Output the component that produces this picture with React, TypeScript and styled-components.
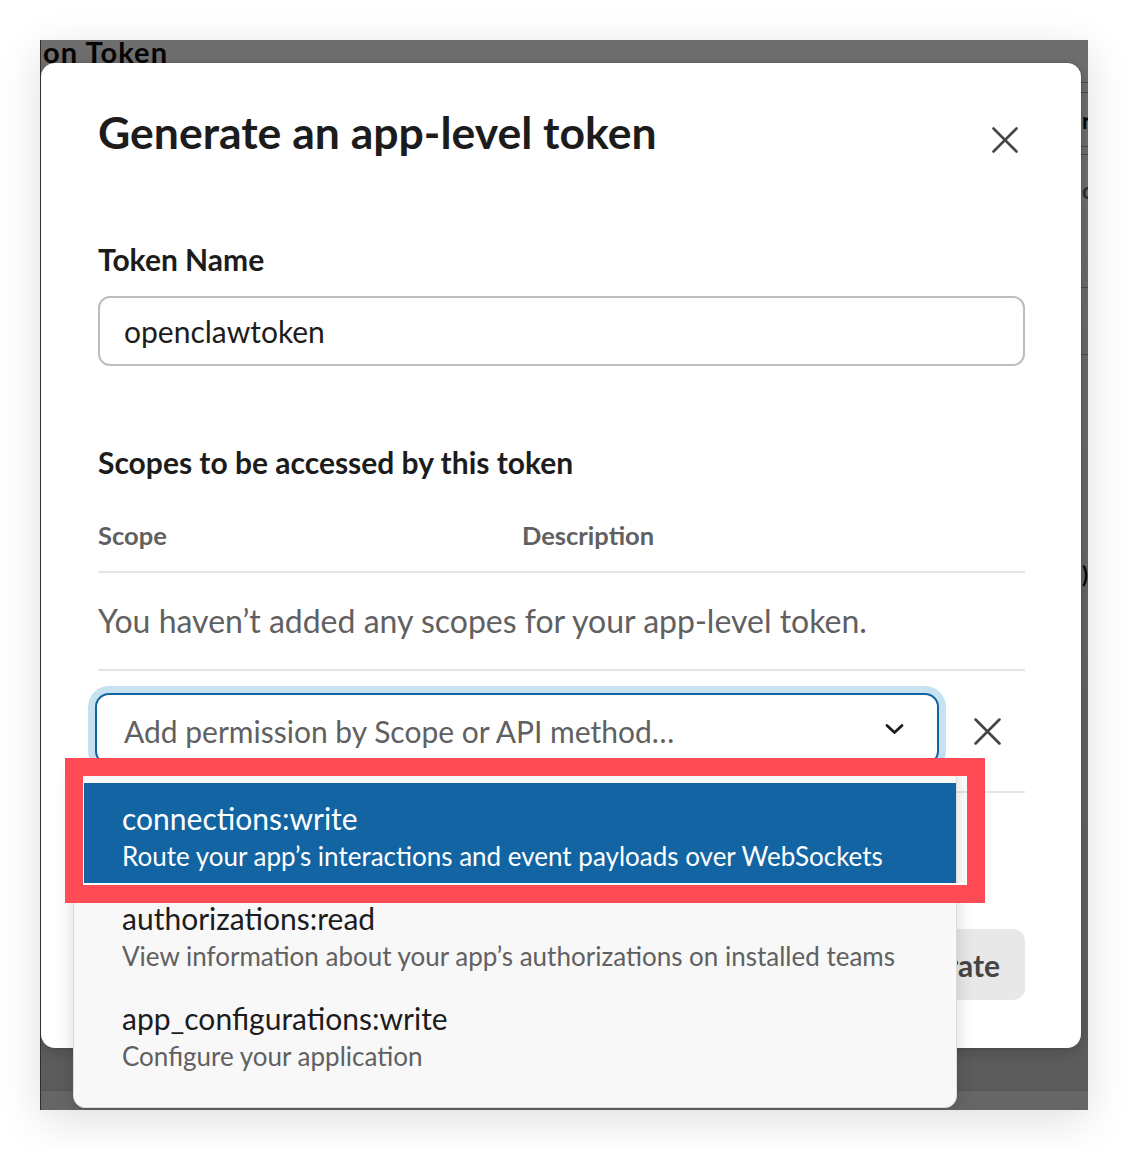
import React from "react";
import styled, { createGlobalStyle } from "styled-components";

const Global = createGlobalStyle`
  html, body { margin: 0; padding: 0; background: #ffffff; }
  body { font-family: Lato, "Noto Sans", "Liberation Sans", sans-serif; -webkit-font-smoothing: antialiased; }
  * { box-sizing: border-box; }
`;

const Page = styled.div`
  width: 1128px;
  height: 1150px;
  padding: 40px;
  background: #ffffff;
`;

const Frame = styled.div`
  position: relative;
  width: 1048px;
  height: 1070px;
  overflow: hidden;
  border-left: 1px solid #2e2e2e;
  background: linear-gradient(#6e6e6e, #5b5b5b);
  box-shadow: 0 10px 40px rgba(0, 0, 0, 0.13);
  display: flex;
  flex-direction: column;
`;

const BgTop = styled.div`
  display: grid;
  grid-template-columns: 1040px 200px;
  flex: 1;
`;

const BgMain = styled.div`
  padding-left: 2px;
  overflow: hidden;
`;

const BgTitle = styled.div`
  font-size: 29px;
  font-weight: 700;
  letter-spacing: 1.1px;
  line-height: 23px;
  color: #050505;
  white-space: nowrap;
`;

const BgAside = styled.div`
  display: flex;
  flex-direction: column;
  padding-top: 42px;
  overflow: hidden;
`;

const BgRule = styled.div<{ $gap: number }>`
  height: 1px;
  background: #4a4a4a;
  margin-top: ${(p) => p.$gap}px;
`;

const BgGlyph = styled.div<{ $gap: number; $color?: string }>`
  margin-top: ${(p) => p.$gap}px;
  padding-left: 1px;
  font-size: 22px;
  font-weight: 700;
  line-height: 20px;
  color: ${(p) => p.$color || "#050505"};
`;

const BgFooter = styled.div`
  height: 20px;
  border-top: 1px solid #555555;
  background: #666666;
`;

const Modal = styled.div`
  position: absolute;
  left: 0;
  top: 23px;
  width: 1040px;
  height: 985px;
  background: #ffffff;
  border-radius: 14px;
  box-shadow: 0 0 0 1px rgba(0, 0, 0, 0.06), 0 4px 14px rgba(0, 0, 0, 0.18);
  padding: 44px 56px 48px 57px;
  display: flex;
  flex-direction: column;
  color: #1d1c1d;
`;

const Header = styled.div`
  display: flex;
  justify-content: space-between;
  align-items: flex-start;
`;

const Title = styled.h1`
  margin: 0;
  font-size: 44.5px;
  line-height: 50px;
  font-weight: 700;
  color: #1d1c1d;
`;

const IconButton = styled.button<{ $mt?: number; $mr?: number; $ml?: number }>`
  border: 0;
  background: none;
  padding: 0;
  margin: ${(p) => `${p.$mt || 0}px ${p.$mr || 0}px 0 ${p.$ml || 0}px`};
  width: 27px;
  height: 27px;
  display: flex;
  align-items: center;
  justify-content: center;
  color: #454545;
  flex: 0 0 auto;
`;

const Label = styled.div<{ $mt: number }>`
  margin-top: ${(p) => p.$mt}px;
  font-size: 30px;
  line-height: 32px;
  font-weight: 700;
  color: #1d1c1d;
`;

const TextInput = styled.div`
  margin-top: 21px;
  height: 70px;
  border: 2px solid #bdbdbd;
  border-radius: 12px;
  padding: 0 24px;
  display: flex;
  align-items: center;
  font-size: 30px;
  color: #1d1c1d;
`;

const TableHead = styled.div`
  margin-top: 43px;
  display: grid;
  grid-template-columns: 424px 1fr;
  padding-bottom: 22px;
  border-bottom: 2px solid #e4e4e4;
  font-size: 25.5px;
  line-height: 28px;
  font-weight: 700;
  color: #616061;
`;

const EmptyRow = styled.div`
  padding: 30px 0;
  border-bottom: 2px solid #e4e4e4;
  font-size: 32px;
  line-height: 36px;
  color: #616061;
`;

const SelectRow = styled.div`
  padding: 22px 0 26px;
  border-bottom: 2px solid #e4e4e4;
  display: flex;
  align-items: center;
`;

const SelectWrap = styled.div`
  position: relative;
  flex: 0 0 844px;
  margin-left: -3px;
`;

const SelectBox = styled.div`
  height: 72px;
  border: 2px solid #1264a3;
  border-radius: 14px;
  box-shadow: 0 0 0 7px #c6e1f0;
  padding: 0 33px 0 27px;
  display: flex;
  align-items: center;
  background: #ffffff;
`;

const Placeholder = styled.div`
  flex: 1;
  font-size: 30px;
  color: #616061;
  padding-top: 3px;
`;

const Menu = styled.div`
  position: absolute;
  left: -22px;
  top: 69px;
  width: 884px;
  background: #f8f8f8;
  border: 1px solid #dcdcdc;
  border-radius: 12px;
  padding: 20px 0 24px;
  box-shadow: 0 6px 18px rgba(0, 0, 0, 0.16);
  z-index: 5;
`;

const Option = styled.div<{ $active?: boolean }>`
  position: relative;
  height: 100px;
  padding: 18px 0 0 48px;
  background: ${(p) => (p.$active ? "#1264a3" : "transparent")};
`;

const OptionName = styled.div<{ $active?: boolean }>`
  font-size: 30px;
  line-height: 34px;
  color: ${(p) => (p.$active ? "#ffffff" : "#1d1c1d")};
  white-space: nowrap;
`;

const OptionDesc = styled.div<{ $active?: boolean }>`
  margin-top: 6px;
  font-size: 26px;
  line-height: 30px;
  color: ${(p) => (p.$active ? "#ffffff" : "#616061")};
  white-space: nowrap;
`;

const Highlight = styled.div`
  position: absolute;
  left: -9px;
  top: -25px;
  width: 920px;
  height: 145px;
  border: 18px solid #ff4b55;
  pointer-events: none;
`;

const HighlightInner = styled.div`
  position: absolute;
  left: 0;
  right: 0;
  top: 7px;
  bottom: 0;
  border-left: 1px solid #ffffff;
  border-bottom: 2px solid #ffffff;
`;

const Footer = styled.div`
  margin-top: auto;
  display: flex;
  justify-content: flex-end;
`;

const PrimaryButton = styled.button`
  height: 71px;
  padding: 0 25px;
  border: 0;
  border-radius: 12px;
  background: #e8e8e8;
  font-family: inherit;
  font-size: 30px;
  font-weight: 700;
  color: #454545;
`;

const CloseIcon = ({ size = 26 }: { size?: number }) => (
  <svg width={size} height={size} viewBox="0 0 26 26" fill="none">
    <path d="M1.5 1.5 L24.5 24.5 M24.5 1.5 L1.5 24.5" stroke="currentColor" strokeWidth="2.6" strokeLinecap="round" />
  </svg>
);

const Chevron = () => (
  <svg width="19" height="12" viewBox="0 0 19 12" fill="none">
    <path d="M2 2.5 L9.5 9.5 L17 2.5" stroke="#1d1c1d" strokeWidth="2.8" strokeLinecap="round" strokeLinejoin="round" />
  </svg>
);

const options = [
  { name: "connections:write", desc: "Route your app’s interactions and event payloads over WebSockets" },
  { name: "authorizations:read", desc: "View information about your app’s authorizations on installed teams" },
  { name: "app_configurations:write", desc: "Configure your application" },
];

export default function App() {
  return (
    <>
      <Global />
      <Page>
        <Frame>
          <BgTop>
            <BgMain>
              <BgTitle>on Token</BgTitle>
            </BgMain>
            <BgAside>
              <BgRule $gap={0} />
              <BgRule $gap={9} />
              <BgGlyph $gap={18}>r</BgGlyph>
              <BgRule $gap={15} />
              <BgRule $gap={7} />
              <BgGlyph $gap={26} $color="#2a2a2a">o</BgGlyph>
              <BgRule $gap={86} />
              <BgRule $gap={66} />
              <BgGlyph $gap={210}>)</BgGlyph>
            </BgAside>
          </BgTop>
          <BgFooter />
          <Modal>
            <Header>
              <Title>Generate an app-level token</Title>
              <IconButton $mt={19} $mr={7} aria-label="Close">
                <CloseIcon />
              </IconButton>
            </Header>
            <Label $mt={86}>Token Name</Label>
            <TextInput>openclawtoken</TextInput>
            <Label $mt={80}>Scopes to be accessed by this token</Label>
            <TableHead>
              <div>Scope</div>
              <div>Description</div>
            </TableHead>
            <EmptyRow>You haven’t added any scopes for your app-level token.</EmptyRow>
            <SelectRow>
              <SelectWrap>
                <SelectBox>
                  <Placeholder>Add permission by Scope or API method…</Placeholder>
                  <Chevron />
                </SelectBox>
                <Menu>
                  {options.map((o, i) => (
                    <Option key={o.name} $active={i === 0}>
                      <OptionName $active={i === 0}>{o.name}</OptionName>
                      <OptionDesc $active={i === 0}>{o.desc}</OptionDesc>
                      {i === 0 && (
                        <Highlight>
                          <HighlightInner />
                        </Highlight>
                      )}
                    </Option>
                  ))}
                </Menu>
              </SelectWrap>
              <IconButton $ml={35} $mt={4} aria-label="Remove">
                <CloseIcon size={27} />
              </IconButton>
            </SelectRow>
            <Footer>
              <PrimaryButton>Generate</PrimaryButton>
            </Footer>
          </Modal>
        </Frame>
      </Page>
    </>
  );
}
